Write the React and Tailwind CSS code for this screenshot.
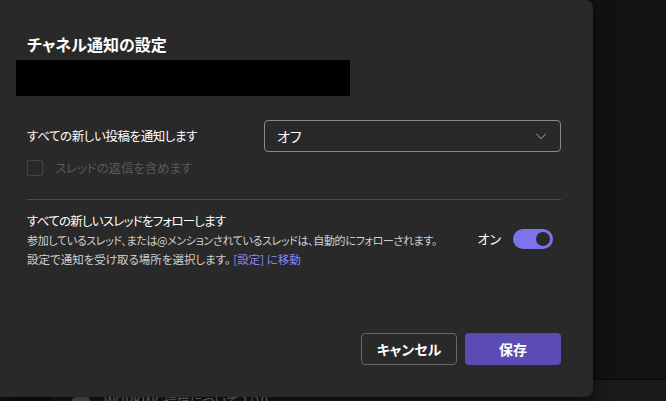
import React from "react";

const jp = { fontFamily: '"Noto Sans CJK JP", "Noto Sans", sans-serif', fontFeatureSettings: '"palt"' };

export default function App() {
  return (
    <div className="relative w-[666px] h-[401px] overflow-hidden bg-[#121212]" style={jp}>
      {/* background app content */}
      <div className="absolute left-0 right-0 top-[379px] h-px bg-[#0a0a0a]" />
      <div className="absolute left-[52px] right-0 top-[380px] bottom-0 bg-[#1a1a1a]" />
      <div className="absolute left-[72px] top-[397px] w-[18px] h-[14px] rounded-sm bg-[#6b5a5a]" />
      <div className="absolute left-[104px] top-[393px] text-[13px] leading-[16px] text-[#8a8a8a] whitespace-nowrap">WORKING環境について 1/10</div>

      {/* dialog */}
      <div className="absolute left-0 top-0 w-[593px] h-[397px] bg-[#292929] rounded-r-lg shadow-[0_4px_16px_rgba(0,0,0,0.6)] flex flex-col">
        <div className="pt-[33px] pl-[27px] text-[16px] leading-[22px] font-bold text-white">チャネル通知の設定</div>
        <div className="ml-[16px] mt-[5px] w-[334px] h-[36px] bg-black" />

        <div className="mt-[24px] pl-[27px] pr-[32px] flex items-center justify-between">
          <span className="text-[12.5px] tracking-[-0.4px] text-white">すべての新しい投稿を通知します</span>
          <div className="w-[297px] h-[32px] rounded-[4px] border border-[#8a8a8a] flex items-center justify-between pl-[12px] pr-[12px]">
            <span className="text-[14px] text-white">オフ</span>
            <svg width="14" height="14" viewBox="0 0 16 16" fill="none">
              <path d="M2.5 5.5 L8 11 L13.5 5.5" stroke="#b0b0b0" strokeWidth="1.1" />
            </svg>
          </div>
        </div>

        <div className="mt-[8px] pl-[27px] flex items-center h-[16px]">
          <div className="w-[16px] h-[16px] border border-[#444444] rounded-[2px]" />
          <span className="ml-[12px] text-[12.5px] tracking-[-0.1px] text-[#5a5a5a]">スレッドの返信を含めます</span>
        </div>

        <div className="mt-[23px] ml-[27px] mr-[32px] h-px bg-[#4d4d4d]" />

        <div className="mt-[11px] pl-[27px] pr-[40px] flex items-start justify-between">
          <div className="flex flex-col">
            <span className="text-[12.5px] leading-[20px] tracking-[-0.75px] text-white whitespace-nowrap">すべての新しいスレッドをフォローします</span>
            <span className="text-[11px] leading-[19px] tracking-[-0.35px] text-[#d0d0d0] whitespace-nowrap">参加しているスレッド、または@メンションされているスレッドは、自動的にフォローされます。</span>
            <span className="text-[11.5px] leading-[19px] text-[#d0d0d0] whitespace-nowrap">
              設定で通知を受け取る場所を選択します。 <span className="text-[#8b84f0]">[設定] に移動</span>
            </span>
          </div>
          <div className="flex items-center mt-[18px] shrink-0">
            <span className="text-[13px] text-white mr-[12px] whitespace-nowrap">オン</span>
            <div className="w-[40px] h-[20px] rounded-full bg-[#7f73ec] flex items-center justify-end pr-[3px]">
              <div className="w-[14px] h-[14px] rounded-full bg-[#292929]" />
            </div>
          </div>
        </div>

        <div className="mt-auto mb-[32px] pr-[32px] flex justify-end gap-[8px]">
          <button className="w-[96px] h-[32px] rounded-[4px] border border-[#666666] bg-[#292929] text-[14px] font-bold text-white">キャンセル</button>
          <button className="w-[96px] h-[32px] rounded-[4px] bg-[#5b4bb5] text-[14px] font-bold text-white">保存</button>
        </div>
      </div>
    </div>
  );
}
